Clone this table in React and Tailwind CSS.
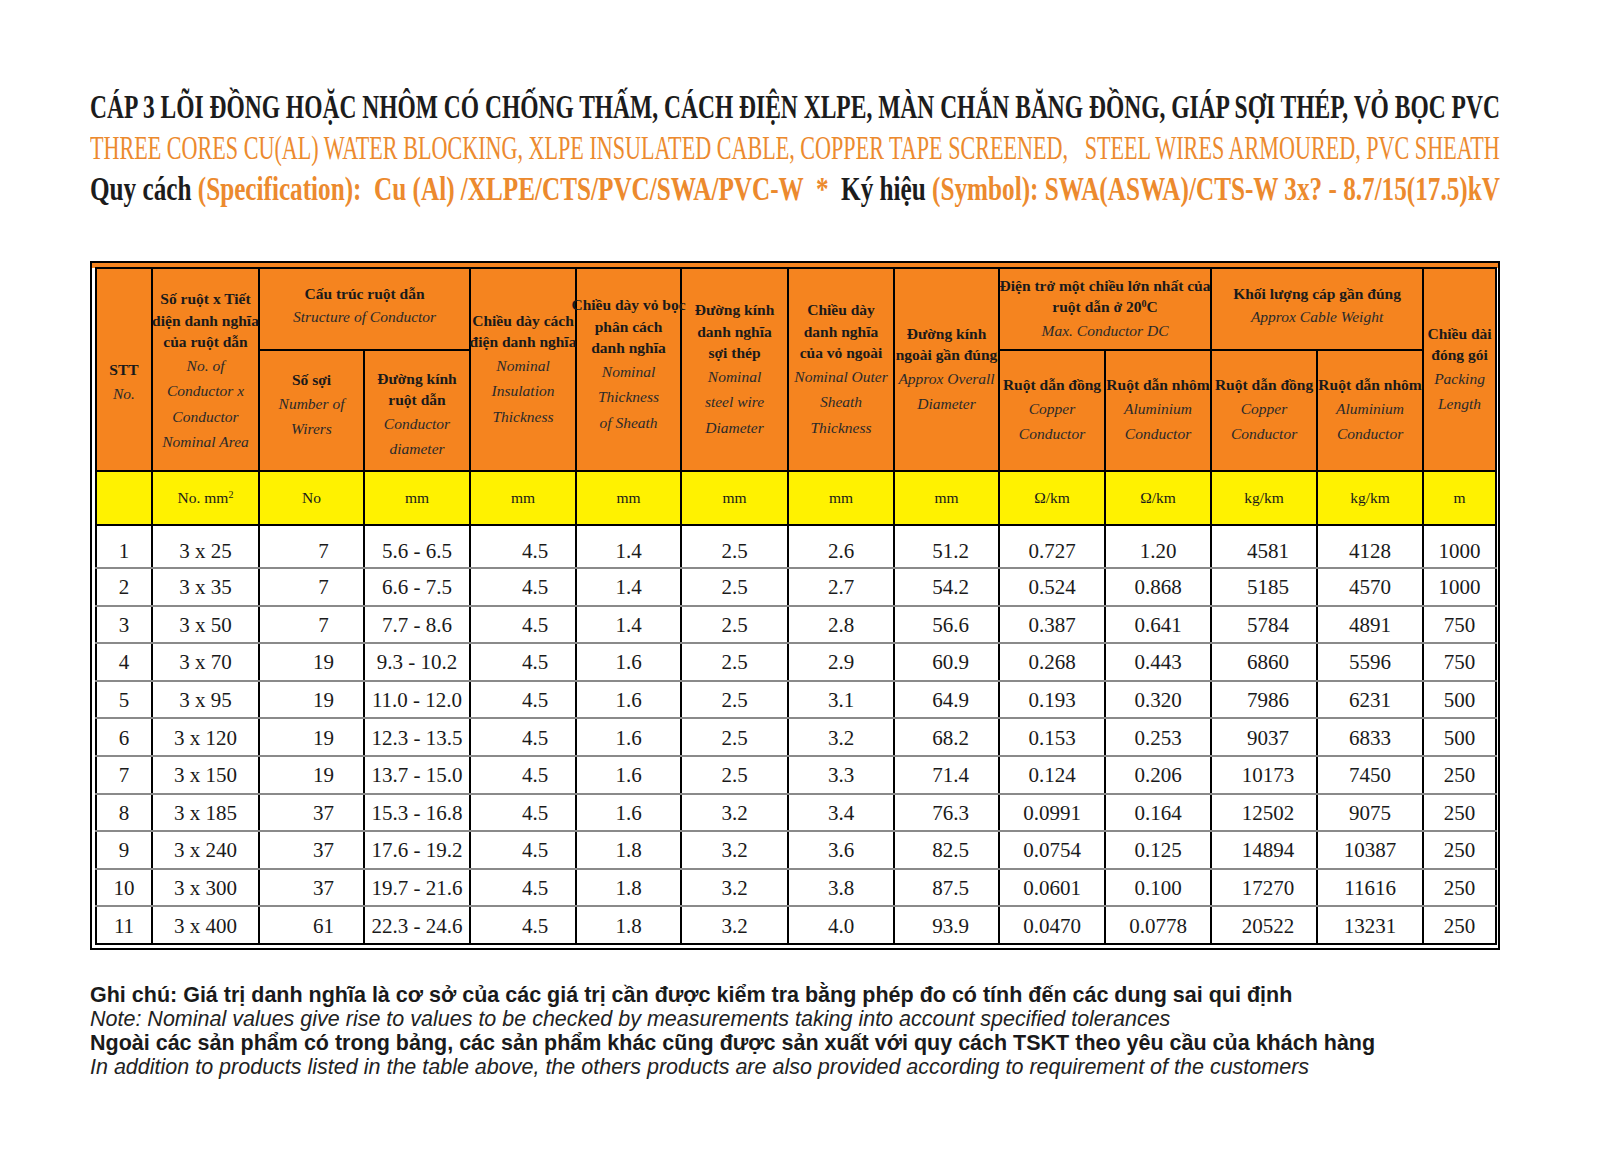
import { useLayoutEffect, useRef, useState } from 'react';

const rows = [
  ['1', '3 x 25', '7', '5.6 - 6.5', '4.5', '1.4', '2.5', '2.6', '51.2', '0.727', '1.20', '4581', '4128', '1000'],
  ['2', '3 x 35', '7', '6.6 - 7.5', '4.5', '1.4', '2.5', '2.7', '54.2', '0.524', '0.868', '5185', '4570', '1000'],
  ['3', '3 x 50', '7', '7.7 - 8.6', '4.5', '1.4', '2.5', '2.8', '56.6', '0.387', '0.641', '5784', '4891', '750'],
  ['4', '3 x 70', '19', '9.3 - 10.2', '4.5', '1.6', '2.5', '2.9', '60.9', '0.268', '0.443', '6860', '5596', '750'],
  ['5', '3 x 95', '19', '11.0 - 12.0', '4.5', '1.6', '2.5', '3.1', '64.9', '0.193', '0.320', '7986', '6231', '500'],
  ['6', '3 x 120', '19', '12.3 - 13.5', '4.5', '1.6', '2.5', '3.2', '68.2', '0.153', '0.253', '9037', '6833', '500'],
  ['7', '3 x 150', '19', '13.7 - 15.0', '4.5', '1.6', '2.5', '3.3', '71.4', '0.124', '0.206', '10173', '7450', '250'],
  ['8', '3 x 185', '37', '15.3 - 16.8', '4.5', '1.6', '3.2', '3.4', '76.3', '0.0991', '0.164', '12502', '9075', '250'],
  ['9', '3 x 240', '37', '17.6 - 19.2', '4.5', '1.8', '3.2', '3.6', '82.5', '0.0754', '0.125', '14894', '10387', '250'],
  ['10', '3 x 300', '37', '19.7 - 21.6', '4.5', '1.8', '3.2', '3.8', '87.5', '0.0601', '0.100', '17270', '11616', '250'],
  ['11', '3 x 400', '61', '22.3 - 24.6', '4.5', '1.8', '3.2', '4.0', '93.9', '0.0470', '0.0778', '20522', '13231', '250'],
];

const widths = [56, 107, 105, 106, 106, 105, 107, 106, 105, 106, 106, 106, 106, 73];
const units = ['', 'No. mm', 'No', 'mm', 'mm', 'mm', 'mm', 'mm', 'mm', 'Ω/km', 'Ω/km', 'kg/km', 'kg/km', 'm'];

// stretch a title line to the full content width (the original uses a condensed face)
function FitLine({ className, children }) {
  const ref = useRef(null);
  const [scale, setScale] = useState(1);

  useLayoutEffect(() => {
    const measure = () => {
      if (ref.current) setScale(1410 / ref.current.offsetWidth);
    };
    measure();
    if (document.fonts) document.fonts.ready.then(measure);
  }, []);

  return (
    <div className="h-[41px] w-[1410px] overflow-hidden leading-[41px]">
      <div
        ref={ref}
        className={'inline-block origin-left whitespace-pre ' + className}
        style={{ transform: `scaleX(${scale})` }}
      >
        {children}
      </div>
    </div>
  );
}

function Head({ bold, italic, className = '' }) {
  return (
    <div className={'flex flex-col items-center ' + className}>
      {bold.map((t, i) => (
        <div key={'b' + i} className="whitespace-nowrap text-[15.5px] font-bold leading-[21.5px] text-[#1a1a1a]">{t}</div>
      ))}
      {italic.map((t, i) => (
        <div key={'i' + i} className="whitespace-nowrap text-[15.5px] font-normal italic leading-[25.5px] text-[#2a2a2a]">{t}</div>
      ))}
    </div>
  );
}

const th = 'border-2 border-black bg-[#f5841f] p-0 align-middle';

export default function App() {
  return (
    <div className="min-h-[1164px] w-[1600px] bg-white pt-[86px] pl-[90px] font-['Liberation_Serif',serif]">
      <div className="text-[34px] font-['Liberation_Serif',serif]">
        <FitLine className="font-bold text-[#1c1c1c]">
          CÁP 3 LÕI ĐỒNG HOẶC NHÔM CÓ CHỐNG THẤM, CÁCH ĐIỆN XLPE, MÀN CHẮN BĂNG ĐỒNG, GIÁP SỢI THÉP, VỎ BỌC PVC
        </FitLine>
        <FitLine className="text-[#ec8a2e]">
          THREE CORES CU(AL) WATER BLOCKING, XLPE INSULATED CABLE, COPPER TAPE SCREENED,   STEEL WIRES ARMOURED, PVC SHEATH
        </FitLine>
        <FitLine className="font-bold text-[#1c1c1c]">
          Quy cách <span className="text-[#ec8a2e]">(Specification):  Cu (Al) /XLPE/CTS/PVC/SWA/PVC-W  *  </span>Ký hiệu{' '}
          <span className="text-[#ec8a2e]">(Symbol): SWA(ASWA)/CTS-W 3x? - 8.7/15(17.5)kV</span>
        </FitLine>
      </div>

      <div className="mt-[52px] w-[1410px] border-2 border-black bg-[linear-gradient(to_bottom,#f5841f_5px,#ffffff_5px)] px-[3px] pt-[4px] pb-[3px]">
        <table className="w-full table-fixed border-collapse border-2 border-black">
          <colgroup>
            {widths.map((w, i) => (
              <col key={i} style={{ width: w }} />
            ))}
          </colgroup>
          <thead>
            <tr className="h-[82px]">
              <th rowSpan={2} className={th}>
                <Head bold={['STT']} italic={['No.']} className="pt-[26px]" />
              </th>
              <th rowSpan={2} className={th}>
                <Head bold={['Số ruột x Tiết', 'diện danh nghĩa', 'của ruột dẫn']} italic={['No. of', 'Conductor x', 'Conductor', 'Nominal Area']} className="pt-[4px]" />
              </th>
              <th colSpan={2} className={th}>
                <Head bold={['Cấu trúc ruột dẫn']} italic={['Structure of Conductor']} className="pb-[6px]" />
              </th>
              <th rowSpan={2} className={th}>
                <Head bold={['Chiều dày cách', 'điện danh nghĩa']} italic={['Nominal', 'Insulation', 'Thickness']} />
              </th>
              <th rowSpan={2} className={th}>
                <Head bold={['Chiều dày vỏ bọc', 'phân cách', 'danh nghĩa']} italic={['Nominal', 'Thickness', 'of Sheath']} className="pb-[10px]" />
              </th>
              <th rowSpan={2} className={th}>
                <Head bold={['Đường kính', 'danh nghĩa', 'sợi thép']} italic={['Nominal', 'steel wire', 'Diameter']} />
              </th>
              <th rowSpan={2} className={th}>
                <Head bold={['Chiều dày', 'danh nghĩa', 'của vỏ ngoài']} italic={['Nominal Outer', 'Sheath', 'Thickness']} />
              </th>
              <th rowSpan={2} className={th}>
                <Head bold={['Đường kính', 'ngoài gần đúng']} italic={['Approx Overall', 'Diameter']} />
              </th>
              <th colSpan={2} className={th}>
                <Head
                  bold={[
                    'Điện trở một chiều lớn nhất của',
                    <span key="t">
                      ruột dẫn ở 20<sup className="text-[10px]">0</sup>C
                    </span>,
                  ]}
                  italic={['Max. Conductor DC']}
                />
              </th>
              <th colSpan={2} className={th}>
                <Head bold={['Khối lượng cáp gần đúng']} italic={['Approx Cable Weight']} className="pb-[6px]" />
              </th>
              <th rowSpan={2} className={th}>
                <Head bold={['Chiều dài', 'đóng gói']} italic={['Packing', 'Length']} />
              </th>
            </tr>
            <tr className="h-[121px]">
              <th className={th}>
                <Head bold={['Số sợi']} italic={['Number of', 'Wirers']} className="pb-[10px]" />
              </th>
              <th className={th}>
                <Head bold={['Đường kính', 'ruột dẫn']} italic={['Conductor', 'diameter']} className="pt-[8px]" />
              </th>
              <th className={th}>
                <Head bold={['Ruột dẫn đồng']} italic={['Copper', 'Conductor']} />
              </th>
              <th className={th}>
                <Head bold={['Ruột dẫn nhôm']} italic={['Aluminium', 'Conductor']} />
              </th>
              <th className={th}>
                <Head bold={['Ruột dẫn đồng']} italic={['Copper', 'Conductor']} />
              </th>
              <th className={th}>
                <Head bold={['Ruột dẫn nhôm']} italic={['Aluminium', 'Conductor']} />
              </th>
            </tr>
            <tr className="h-[54px]">
              {units.map((u, i) => (
                <th key={i} className="border-2 border-black bg-[#fff200] p-0 text-center align-middle text-[15.5px] font-normal text-[#1a1a1a]">
                  {u}
                  {i === 1 && <sup className="text-[10px]">2</sup>}
                </th>
              ))}
            </tr>
          </thead>
          <tbody>
            {rows.map((r, ri) => (
              <tr key={ri} className={ri === 0 ? 'h-[43px]' : 'h-[37.6px]'}>
                {r.map((v, ci) => (
                  <td
                    key={ci}
                    className={
                      'border-2 border-black p-0 text-center text-[21px] leading-none text-[#1a1a1a] ' +
                      (ri === 0 ? 'pt-[10px] ' : 'pt-[2px] ') +
                      (ri > 0 ? 'border-t-[#8a8a8a] ' : '') +
                      (ri < rows.length - 1 ? 'border-b-[#8a8a8a] ' : '') +
                      (ci === 2 || ci === 4 ? 'pl-[24px] ' : '') +
                      (ci === 8 || ci === 11 ? 'pl-[8px] ' : '')
                    }
                  >
                    {v}
                  </td>
                ))}
              </tr>
            ))}
          </tbody>
        </table>
      </div>

      <div className="mt-[33px] font-['Liberation_Sans',Arial,sans-serif] text-[21.5px] leading-[24px] text-[#1a1a1a]">
        <p className="font-bold">Ghi chú: Giá trị danh nghĩa là cơ sở của các giá trị cần được kiểm tra bằng phép đo có tính đến các dung sai qui định</p>
        <p className="italic text-[#222]">Note: Nominal values give rise to values to be checked by measurements taking into account specified tolerances</p>
        <p className="font-bold">Ngoài các sản phẩm có trong bảng, các sản phẩm khác cũng được sản xuất với quy cách TSKT theo yêu cầu của khách hàng</p>
        <p className="italic text-[#222]">In addition to products listed in the table above, the others products are also provided according to requirement of the customers</p>
      </div>
    </div>
  );
}
